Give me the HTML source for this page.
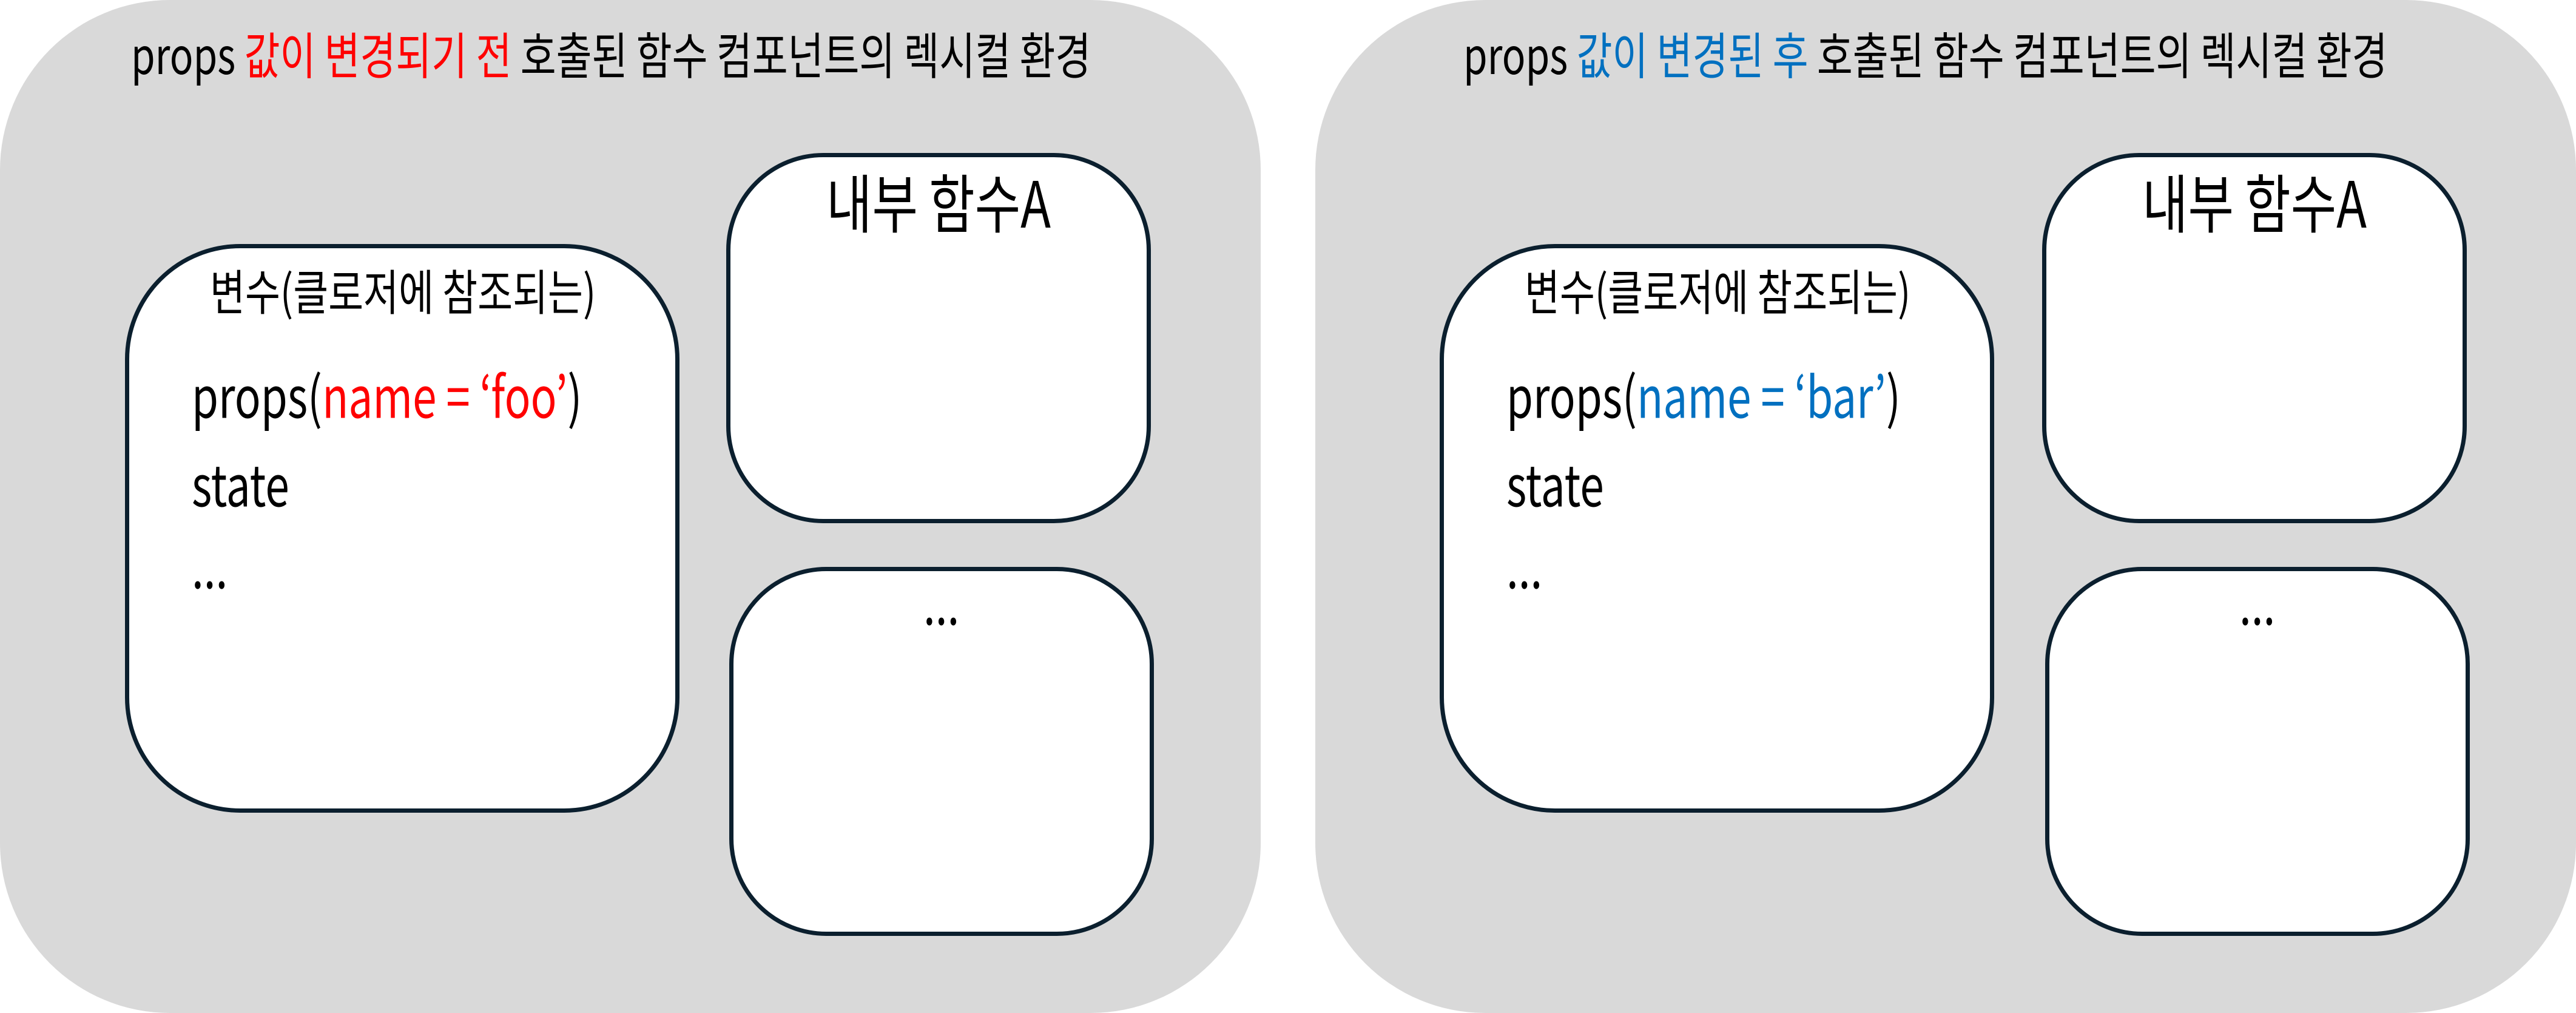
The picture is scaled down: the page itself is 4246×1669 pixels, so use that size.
<!DOCTYPE html>
<html><head><meta charset="utf-8"><style>
html,body{margin:0;padding:0}
body{width:4246px;height:1669px;background:#fff;position:relative;overflow:hidden;font-family:"Liberation Sans","Noto Sans CJK KR",sans-serif;color:#000}
.panel{position:absolute;top:0;width:2078px;height:1669px;background:#d9d9d9;border-radius:280px}
.box{position:absolute;background:#fff;border:7px solid #0b1f2e;box-sizing:border-box}
.t{position:absolute;white-space:nowrap;line-height:1;transform-origin:left center;font-family:"Noto Sans CJK KR",sans-serif}
.r{color:#ff0000}.b{color:#0070c0}
.h{font-size:64px;top:55px;transform:scaleY(1.29)}
.bt{font-size:63px;top:446px;transform:scaleY(1.27)}
.l{font-size:71px;transform:scaleY(1.32)}
.fa{font-size:82px;top:289px;transform:scaleY(1.28)}
</style></head><body>
<div class="panel" style="left:0"></div>
<div class="panel" style="left:2168px"></div>

<!-- left -->
<div class="t h" style="left:216px">props <span class="r">값이 변경되기 전</span> 호출된 함수 컴포넌트의 렉시컬 환경</div>
<div class="box" style="left:206px;top:402px;width:914px;height:937px;border-radius:190px"></div>
<div class="t bt" style="left:346px">변수(클로저에 참조되는)</div>
<div class="t l" style="left:316px;top:614px">props(<span class="r">name = ‘foo’</span>)</div>
<div class="t l" style="left:316px;top:760px">state</div>
<div class="t l" style="left:316px;top:895px">...</div>
<div class="box" style="left:1197px;top:252px;width:700px;height:610px;border-radius:160px"></div>
<div class="t fa" style="left:1362px">내부 함수A</div>
<div class="box" style="left:1202px;top:934px;width:700px;height:608px;border-radius:160px"></div>
<div class="t l" style="left:1522px;top:955px">...</div>

<!-- right -->
<div class="t h" style="left:2412px">props <span class="b">값이 변경된 후</span> 호출된 함수 컴포넌트의 렉시컬 환경</div>
<div class="box" style="left:2373px;top:402px;width:914px;height:937px;border-radius:190px"></div>
<div class="t bt" style="left:2513px">변수(클로저에 참조되는)</div>
<div class="t l" style="left:2483px;top:614px">props(<span class="b">name = ‘bar’</span>)</div>
<div class="t l" style="left:2483px;top:760px">state</div>
<div class="t l" style="left:2483px;top:895px">...</div>
<div class="box" style="left:3366px;top:252px;width:700px;height:610px;border-radius:160px"></div>
<div class="t fa" style="left:3531px">내부 함수A</div>
<div class="box" style="left:3371px;top:934px;width:700px;height:608px;border-radius:160px"></div>
<div class="t l" style="left:3691px;top:955px">...</div>
</body></html>
